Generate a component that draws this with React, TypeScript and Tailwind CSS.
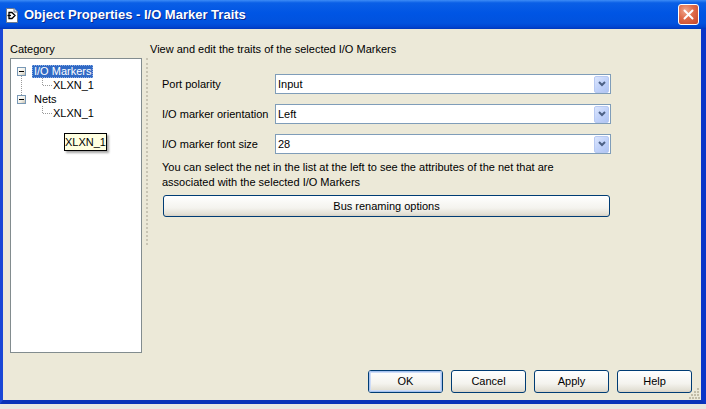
import React from "react";

function Combo({ value }: { value: string }) {
  return (
    <div className="flex h-[20px] w-[336px] items-center border border-[#7F9DB9] bg-white">
      <span className="flex-1 pl-[2px] leading-[18px]">{value}</span>
      <div className="mr-[1px] flex h-[17px] w-[15px] items-center justify-center rounded-[2px] border border-[#B7C9F2] bg-[linear-gradient(135deg,#DCE6FD_0%,#C2D3FA_50%,#AFC4F2_100%)]">
        <svg width="8" height="6" viewBox="0 0 8 6">
          <polyline points="1,1 4,4 7,1" fill="none" stroke="#4D6185" strokeWidth="2" />
        </svg>
      </div>
    </div>
  );
}

function XPButton({ label, def, className }: { label: string; def?: boolean; className?: string }) {
  return (
    <div
      className={
        "flex items-center justify-center rounded-[3px] border border-[#003C74] bg-[linear-gradient(to_bottom,#FFFFFF_0%,#F4F3EE_60%,#E3E0D5_90%,#D6D0C5_100%)] " +
        (className ?? "")
      }
    >
      <div
        className={
          "flex h-full w-full items-center justify-center rounded-[2px] " +
          (def ? "shadow-[inset_0_0_0_1px_#A6C2EF,inset_0_0_0_2px_#CEDCF7]" : "")
        }
      >
        {label}
      </div>
    </div>
  );
}

function Expander() {
  return (
    <div className="flex h-[9px] w-[9px] items-center justify-center border border-[#7898B5] bg-[linear-gradient(135deg,#FFFFFF_0%,#F0EEE6_60%,#C6BEAE_100%)]">
      <div className="h-[1px] w-[5px] bg-black" />
    </div>
  );
}

export default function App() {
  return (
    <div className="h-[409px] w-[706px] overflow-hidden bg-[#E8E7E1] font-['Liberation_Sans',Arial,sans-serif] text-[11px] text-black">
      <div className="flex h-[404px] flex-col">
        {/* Title bar */}
        <div className="flex h-[29px] items-center bg-[linear-gradient(to_bottom,#3D8CF6_0%,#0A5FE6_10%,#0055E4_45%,#0152DE_80%,#0146D2_92%,#0038BC_100%)] pl-[6px] pr-[7px]">
          <svg width="12" height="15" viewBox="0 0 12 15" className="mt-[1px]">
            <path d="M0.5 0.5 H8 L11.5 4 V14.5 H0.5 Z" fill="#FFFFFF" stroke="#6E7A8E" />
            <path d="M8 0.5 V4 H11.5" fill="#DDE3EC" stroke="#6E7A8E" />
            <path d="M3 4.5 H6 L9 7.5 L6 10.5 H3 Z" fill="none" stroke="#000" strokeWidth="1.3" />
            <path d="M1.5 7.5 H5" stroke="#000" strokeWidth="1.3" />
          </svg>
          <span className="ml-[6px] text-[13px] font-bold text-white [text-shadow:1px_1px_#0A2A8F]">
            Object Properties - I/O Marker Traits
          </span>
          <div className="ml-auto flex h-[21px] w-[21px] items-center justify-center rounded-[3px] border border-white bg-[radial-gradient(circle_at_35%_30%,#F0A88E_0%,#DF6A48_45%,#C4452A_100%)]">
            <svg width="11" height="11" viewBox="0 0 11 11">
              <path d="M1.5 1.5 L9.5 9.5 M9.5 1.5 L1.5 9.5" stroke="#FFFFFF" strokeWidth="2" strokeLinecap="round" />
            </svg>
          </div>
        </div>

        {/* Body */}
        <div className="relative flex flex-1 flex-col border-b-[4px] border-l-[3px] border-r-[5px] border-b-[#0A32B8] border-l-[#1A47D6] border-r-[#0B35C8] bg-[#ECE9D8]">
          <div className="flex">
            {/* Left column */}
            <div className="ml-[7px] flex w-[132px] flex-col pt-[14px]">
              <div className="leading-[13px]">Category</div>
              <div className="relative mt-[2px] h-[295px] border border-[#828C8F] bg-white pt-[5px]">
                <svg className="pointer-events-none absolute left-0 top-0" width="60" height="70">
                  <g stroke="#9A9A9A" strokeDasharray="1 1" fill="none">
                    <path d="M10.5 17 V36" />
                    <path d="M31.5 19 V26.5 H41" />
                    <path d="M31.5 47 V54.5 H41" />
                  </g>
                </svg>
                <div className="flex h-[14px] items-center">
                  <div className="ml-[6px]">
                    <Expander />
                  </div>
                  <div className="ml-[6px] h-[13px] bg-[#316AC5] px-[2px] leading-[13px] text-white outline-1 outline-dotted outline-[#8FB0E6] -outline-offset-1">
                    I/O Markers
                  </div>
                </div>
                <div className="flex h-[14px] items-center pl-[42px] leading-[13px]">XLXN_1</div>
                <div className="flex h-[14px] items-center">
                  <div className="ml-[6px]">
                    <Expander />
                  </div>
                  <div className="ml-[6px] px-[2px] leading-[13px]">Nets</div>
                </div>
                <div className="flex h-[14px] items-center pl-[42px] leading-[13px]">XLXN_1</div>

                {/* Tooltip */}
                <div className="absolute left-[53px] top-[74px] flex h-[18px] w-[43px] items-center justify-center border border-black bg-[#FFFFE1] shadow-[2px_2px_2px_rgba(0,0,0,0.35)]">
                  XLXN_1
                </div>
              </div>
            </div>

            {/* Splitter */}
            <div className="ml-[4px] mt-[29px] h-[187px] w-[2px] border-l-2 border-dotted border-[#C9C5B4]" />

            {/* Right column */}
            <div className="ml-[2px] flex flex-col pt-[14px]">
              <div className="leading-[13px]">View and edit the traits of the selected I/O Markers</div>
              <div className="ml-[12px] mt-[18px] flex flex-col">
                <div className="flex h-[20px] items-center">
                  <span className="w-[113px]">Port polarity</span>
                  <Combo value="Input" />
                </div>
                <div className="mt-[10px] flex h-[20px] items-center">
                  <span className="w-[113px]">I/O marker orientation</span>
                  <Combo value="Left" />
                </div>
                <div className="mt-[10px] flex h-[20px] items-center">
                  <span className="w-[113px]">I/O marker font size</span>
                  <Combo value="28" />
                </div>
                <p className="mt-[6px] leading-[15px]">
                  You can select the net in the list at the left to see the attributes of the net that are
                  <br />
                  associated with the selected I/O Markers
                </p>
                <XPButton label="Bus renaming options" className="ml-[1px] mt-[5px] h-[22px] w-[447px]" />
              </div>
            </div>
          </div>

          {/* Bottom buttons */}
          <div className="mt-auto flex justify-end gap-[8px] pb-[7px] pr-[9px]">
            <XPButton label="OK" def className="h-[23px] w-[75px]" />
            <XPButton label="Cancel" className="h-[23px] w-[75px]" />
            <XPButton label="Apply" className="h-[23px] w-[75px]" />
            <XPButton label="Help" className="h-[23px] w-[75px]" />
          </div>

          {/* Size grip */}
          <svg className="pointer-events-none absolute bottom-[1px] right-[1px]" width="11" height="11" viewBox="0 0 11 11">
            <g fill="#C2BDA8">
              <rect x="8" y="0" width="2" height="2" />
              <rect x="5" y="3" width="2" height="2" />
              <rect x="8" y="3" width="2" height="2" />
              <rect x="2" y="6" width="2" height="2" />
              <rect x="5" y="6" width="2" height="2" />
              <rect x="8" y="6" width="2" height="2" />
              <rect x="0" y="9" width="2" height="2" />
              <rect x="3" y="9" width="2" height="2" />
              <rect x="6" y="9" width="2" height="2" />
              <rect x="9" y="9" width="2" height="2" />
            </g>
          </svg>
        </div>
      </div>
    </div>
  );
}
